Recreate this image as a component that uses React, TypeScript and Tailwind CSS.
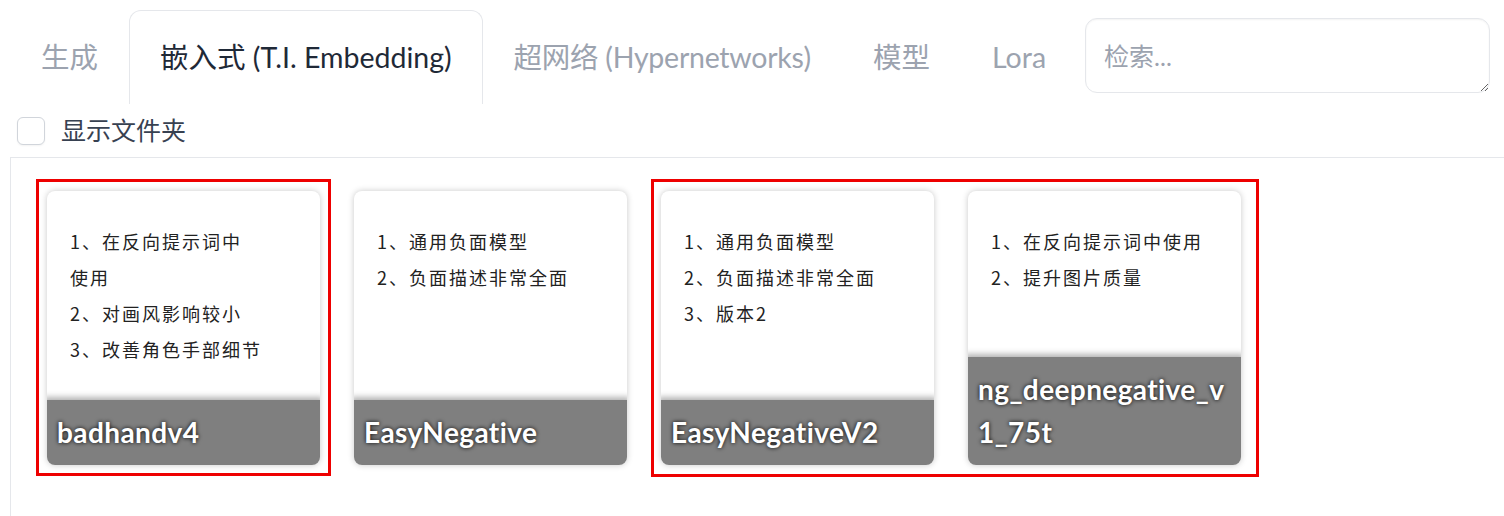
import React from 'react';

type Card = { name: string[]; lines: string[] };

const cards: Card[] = [
  { name: ['badhandv4'], lines: ['1、在反向提示词中', '使用', '2、对画风影响较小', '3、改善角色手部细节'] },
  { name: ['EasyNegative'], lines: ['1、通用负面模型', '2、负面描述非常全面'] },
  { name: ['EasyNegativeV2'], lines: ['1、通用负面模型', '2、负面描述非常全面', '3、版本2'] },
  { name: ['ng_deepnegative_v', '1_75t'], lines: ['1、在反向提示词中使用', '2、提升图片质量'] },
];

const sans = "font-['Source_Sans_Pro','Lato','Noto_Sans_CJK_SC',sans-serif]";

const tabs = [
  { label: '生成', active: false, cls: '' },
  { label: '嵌入式 (T.I. Embedding)', active: true, cls: '' },
  { label: '超网络 (Hypernetworks)', active: false, cls: 'tracking-[-0.25px]' },
  { label: '模型', active: false, cls: '' },
  { label: 'Lora', active: false, cls: '' },
];

const App: React.FC = () => {
  return (
    <div className={`relative w-[1504px] h-[516px] overflow-hidden bg-white ${sans}`}>
      {/* Tab bar */}
      <div className="flex items-start pl-[10px] pt-[10px]">
        {tabs.map(t => (
          <div
            key={t.label}
            className={
              (t.active
                ? 'h-[94px] px-[30px] flex items-center text-[28.5px] text-[#1f2937] border border-b-0 border-[#e5e7eb] rounded-t-[12px] bg-white '
                : 'h-[94px] px-[31px] flex items-center text-[28.5px] text-[#9ca3af] ') + t.cls
            }
          >
            {t.label}
          </div>
        ))}
        <textarea
          placeholder="检索..."
          className="ml-[8px] mt-[8px] w-[405px] h-[75px] rounded-[12px] border border-[#e5e7eb] shadow-[inset_0_1px_2px_rgba(0,0,0,0.05)] px-[18px] pt-[20px] pb-[10px] text-[25px] leading-[34px] placeholder:text-[#9ca3af] outline-none resize-y"
        />
      </div>

      {/* Show folders */}
      <div className="flex items-center h-[53px] pl-[17px]">
        <div className="w-[28px] h-[28px] rounded-[6px] border border-[#d1d5db] bg-white shadow-[0_1px_2px_rgba(0,0,0,0.05)]" />
        <span className="ml-[16px] text-[25px] text-[#374151]">显示文件夹</span>
      </div>

      {/* Cards panel */}
      <div className="ml-[10px] h-[400px] border-t border-l border-[#e5e7eb] pl-[36px] pt-[33px]">
        <div className="flex gap-[34px]">
          {cards.map(c => (
            <div
              key={c.name.join('')}
              className="relative w-[273px] h-[274px] rounded-[8px] overflow-hidden bg-white shadow-[0_0_6px_rgba(0,0,0,0.22)]"
            >
              <div className="pl-[23px] pt-[32px] font-['Noto_Sans_CJK_SC',sans-serif] text-[18px] leading-[36px] tracking-[2px] text-[#222]">
                {c.lines.map(l => (
                  <div key={l}>{l}</div>
                ))}
              </div>
              <div className="absolute left-0 right-0 bottom-0 bg-[rgba(0,0,0,0.5)] shadow-[0_0_6px_3px_rgba(0,0,0,0.3)] px-[10px] py-[11px]">
                {c.name.map(n => (
                  <div key={n} className="text-[28px] leading-[43px] tracking-[0.4px] font-bold text-white [text-shadow:0_0_4px_black]">
                    {n}
                  </div>
                ))}
              </div>
            </div>
          ))}
        </div>
      </div>

      {/* Annotation boxes */}
      <div className="absolute left-[36px] top-[179px] w-[295px] h-[297px] border-[3px] border-[#ee0000] pointer-events-none" />
      <div className="absolute left-[651px] top-[179px] w-[608px] h-[298px] border-[3px] border-[#ee0000] pointer-events-none" />
    </div>
  );
};

export default App;
